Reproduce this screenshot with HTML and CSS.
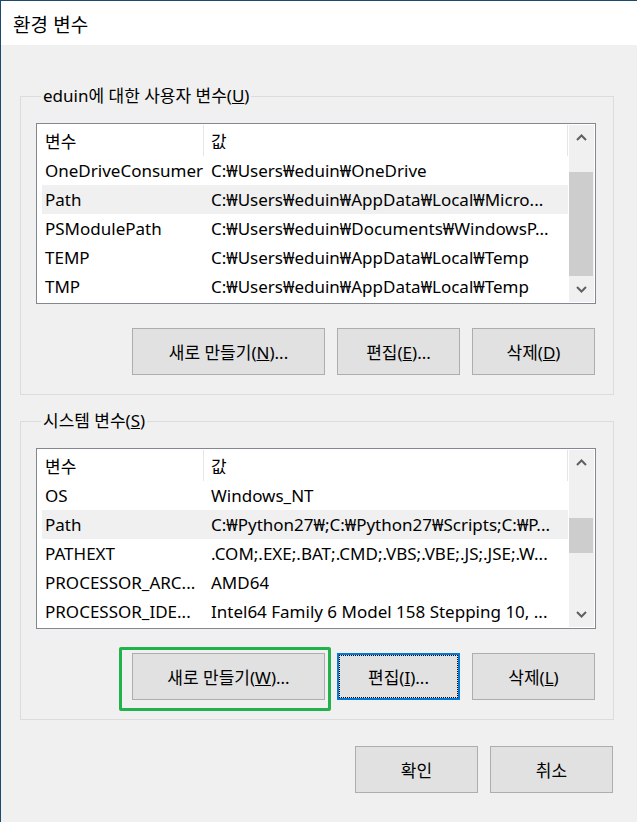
FILE: index.html
```html
<!DOCTYPE html>
<html lang="ko">
<head>
<meta charset="utf-8">
<title>환경 변수</title>
<link rel="stylesheet" href="styles.css">
</head>
<body>
<div class="window">
  <div class="titlebar">환경 변수</div>
  <div class="content">
    <fieldset class="group group-user">
      <legend>eduin에 대한 사용자 변수(<u>U</u>)</legend>
      <div class="listbox">
        <div class="list-main">
          <div class="list-header"><span class="h-name">변수</span><span class="h-value">값</span></div>
          <div class="row"><span class="c-name">OneDriveConsumer</span><span class="c-value">C:₩Users₩eduin₩OneDrive</span></div>
          <div class="row selected"><span class="c-name">Path</span><span class="c-value">C:₩Users₩eduin₩AppData₩Local₩Micro...</span></div>
          <div class="row"><span class="c-name">PSModulePath</span><span class="c-value">C:₩Users₩eduin₩Documents₩WindowsP...</span></div>
          <div class="row"><span class="c-name">TEMP</span><span class="c-value">C:₩Users₩eduin₩AppData₩Local₩Temp</span></div>
          <div class="row"><span class="c-name">TMP</span><span class="c-value">C:₩Users₩eduin₩AppData₩Local₩Temp</span></div>
        </div>
        <div class="scrollbar">
          <div class="sb-btn"><svg width="11" height="7" viewBox="0 0 11 7"><path d="M1 6 L5.5 1.5 L10 6" fill="none" stroke="#606060" stroke-width="2"/></svg></div>
          <div class="sb-track"><div class="sb-thumb" style="margin-top:22px;height:104px"></div></div>
          <div class="sb-btn"><svg width="11" height="7" viewBox="0 0 11 7"><path d="M1 1 L5.5 5.5 L10 1" fill="none" stroke="#606060" stroke-width="2"/></svg></div>
        </div>
      </div>
      <div class="btn-row">
        <button class="btn btn-wide">새로 만들기(<u>N</u>)...</button>
        <button class="btn">편집(<u>E</u>)...</button>
        <button class="btn">삭제(<u>D</u>)</button>
      </div>
    </fieldset>

    <fieldset class="group group-system">
      <legend>시스템 변수(<u>S</u>)</legend>
      <div class="listbox">
        <div class="list-main">
          <div class="list-header"><span class="h-name">변수</span><span class="h-value">값</span></div>
          <div class="row"><span class="c-name">OS</span><span class="c-value">Windows_NT</span></div>
          <div class="row selected"><span class="c-name">Path</span><span class="c-value">C:₩Python27₩;C:₩Python27₩Scripts;C:₩P...</span></div>
          <div class="row"><span class="c-name">PATHEXT</span><span class="c-value">.COM;.EXE;.BAT;.CMD;.VBS;.VBE;.JS;.JSE;.W...</span></div>
          <div class="row"><span class="c-name">PROCESSOR_ARC...</span><span class="c-value">AMD64</span></div>
          <div class="row"><span class="c-name">PROCESSOR_IDE...</span><span class="c-value">Intel64 Family 6 Model 158 Stepping 10, ...</span></div>
        </div>
        <div class="scrollbar">
          <div class="sb-btn"><svg width="11" height="7" viewBox="0 0 11 7"><path d="M1 6 L5.5 1.5 L10 6" fill="none" stroke="#606060" stroke-width="2"/></svg></div>
          <div class="sb-track"><div class="sb-thumb" style="margin-top:43px;height:35px"></div></div>
          <div class="sb-btn"><svg width="11" height="7" viewBox="0 0 11 7"><path d="M1 1 L5.5 5.5 L10 1" fill="none" stroke="#606060" stroke-width="2"/></svg></div>
        </div>
      </div>
      <div class="btn-row">
        <button class="btn btn-wide highlighted">새로 만들기(<u>W</u>)...</button>
        <button class="btn focused">편집(<u>I</u>)...</button>
        <button class="btn">삭제(<u>L</u>)</button>
      </div>
    </fieldset>

    <div class="dialog-buttons">
      <button class="btn">확인</button>
      <button class="btn">취소</button>
    </div>
  </div>
</div>
</body>
</html>
```

FILE: styles.css
```css
html, body {
  margin: 0;
  padding: 0;
  background: #f0f0f0;
}

body {
  font-family: "Noto Sans", "Noto Sans CJK KR", sans-serif;
  font-size: 17px;
  color: #000;
}

.window {
  box-sizing: border-box;
  width: 637px;
  height: 822px;
  border-top: 1px solid #1a4a6d;
  border-left: 1px solid #1a4a6d;
  background: #f0f0f0;
  overflow: hidden;
}

.titlebar {
  height: 44px;
  background: #fff;
  display: flex;
  align-items: center;
  padding-left: 12px;
  font-size: 19px;
  font-family: "Noto Sans CJK KR", sans-serif;
}

.content {
  padding-left: 19px;
}

.group {
  box-sizing: border-box;
  width: 594px;
  margin: 0;
  padding: 0 17px 19px 15px;
  border: 1px solid #dcdcdc;
  min-width: 0;
}

.group-user {
  margin-top: 41px;
}

.group-system {
  margin-top: 16px;
}

.group legend {
  margin-left: 5px;
  padding: 0 2px;
  line-height: 20px;
  font-size: 17px;
}

.listbox {
  margin-top: 17px;
  border: 1px solid #828790;
  background: #fff;
  display: flex;
  height: 179px;
}

.list-main {
  flex: 1;
  min-width: 0;
}

.list-header {
  height: 32px;
  display: flex;
  align-items: stretch;
}

.h-name {
  box-sizing: border-box;
  width: 167px;
  padding-left: 8px;
  border-right: 1px solid #e5e5e5;
  margin-top: 1px;
  display: flex;
  align-items: center;
}

.h-value {
  flex: 1;
  padding-left: 7px;
  border-right: 1px solid #e5e5e5;
  margin-top: 1px;
  margin-right: 1px;
  display: flex;
  align-items: center;
}

.row {
  height: 29px;
  margin: 0 1px 0 5px;
  display: flex;
  align-items: center;
  white-space: nowrap;
}

.row.selected {
  background: #f0f0f0;
}

.c-name {
  box-sizing: border-box;
  width: 164px;
  padding-left: 3px;
  overflow: hidden;
  flex: none;
}

.c-value {
  padding-left: 5px;
  overflow: hidden;
}

.scrollbar {
  width: 25px;
  margin: 1px 1px 1px 0;
  background: #f0f0f0;
  display: flex;
  flex-direction: column;
}

.sb-btn {
  height: 25px;
  display: flex;
  align-items: center;
  justify-content: center;
}

.sb-track {
  flex: 1;
}

.sb-thumb {
  background: #cdcdcd;
  width: 24px;
}

.btn-row {
  margin-top: 24px;
  padding-right: 1px;
  display: flex;
  justify-content: flex-end;
  gap: 12px;
}

.btn {
  box-sizing: border-box;
  width: 123px;
  height: 47px;
  background: #e1e1e1;
  border: 1px solid #adadad;
  border-radius: 0;
  font-family: "Noto Sans", "Noto Sans CJK KR", sans-serif;
  font-size: 17px;
  color: #000;
  padding: 0;
  margin: 0;
}

.btn-wide {
  width: 193px;
}

.btn.focused {
  border: 2px solid #0078d7;
  outline: 1px dotted #000;
  outline-offset: -3px;
}

.btn.highlighted {
  position: relative;
}

.btn.highlighted::after {
  content: "";
  position: absolute;
  left: -14px;
  right: -7px;
  top: -7px;
  bottom: -12px;
  border: 3px solid #22b24c;
  border-radius: 2px;
  pointer-events: none;
}

.dialog-buttons {
  width: 594px;
  box-sizing: border-box;
  margin-top: 26px;
  padding-right: 1px;
  display: flex;
  justify-content: flex-end;
  gap: 12px;
}
```
